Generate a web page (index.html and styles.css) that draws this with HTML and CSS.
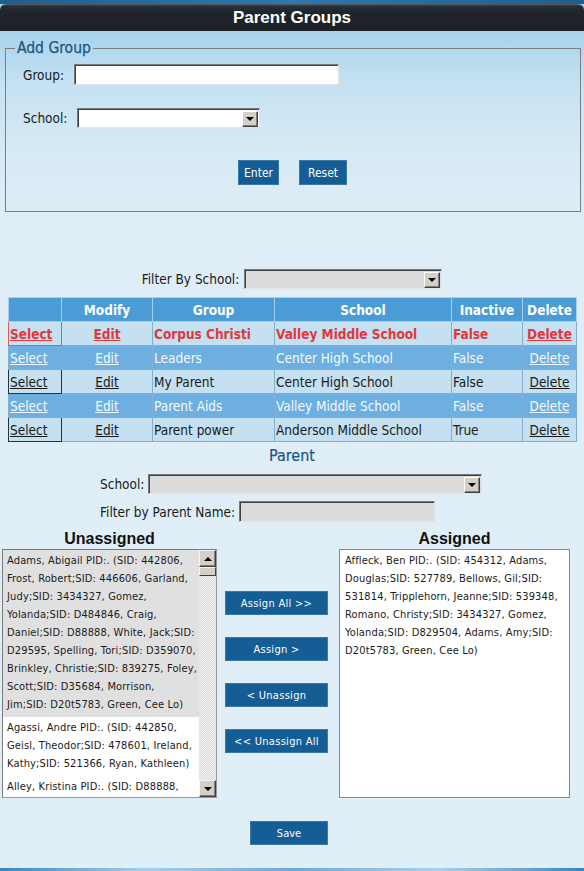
FILE: index.html
```html
<!DOCTYPE html>
<html lang="en">
<head>
<meta charset="utf-8">
<title>Parent Groups</title>
<link rel="stylesheet" href="styles.css">
</head>
<body>
<div class="topstrip"></div>
<header class="titlebar">Parent Groups</header>

<fieldset class="addgroup">
  <legend>Add Group</legend>
  <div class="frow">
    <label class="lbl">Group:</label>
    <input type="text" class="textbox w265">
  </div>
  <div class="frow r2">
    <label class="lbl">School:</label>
    <div class="select white w183"><span class="arrow"></span></div>
  </div>
  <div class="frow r3">
    <button class="btn small">Enter</button>
    <button class="btn small">Reset</button>
  </div>
</fieldset>

<div class="filter">
  <span class="lbl">Filter By School:</span>
  <div class="select gray w198"><span class="arrow"></span></div>
</div>

<table class="grid">
  <colgroup>
    <col class="c1"><col class="c2"><col class="c3"><col class="c4"><col class="c5"><col class="c6">
  </colgroup>
  <thead>
    <tr><th></th><th>Modify</th><th>Group</th><th>School</th><th>Inactive</th><th>Delete</th></tr>
  </thead>
  <tbody>
    <tr class="sel">
      <td class="first red"><a href="#">Select</a></td><td class="ctr"><a href="#">Edit</a></td><td>Corpus Christi</td><td>Valley Middle School</td><td>False</td><td class="ctr"><a href="#">Delete</a></td>
    </tr>
    <tr class="alt">
      <td class="first"><a href="#">Select</a></td><td class="ctr"><a href="#">Edit</a></td><td>Leaders</td><td>Center High School</td><td>False</td><td class="ctr"><a href="#">Delete</a></td>
    </tr>
    <tr class="norm">
      <td class="first dark"><a href="#">Select</a></td><td class="ctr"><a href="#">Edit</a></td><td>My Parent</td><td>Center High School</td><td>False</td><td class="ctr"><a href="#">Delete</a></td>
    </tr>
    <tr class="alt">
      <td class="first"><a href="#">Select</a></td><td class="ctr"><a href="#">Edit</a></td><td>Parent Aids</td><td>Valley Middle School</td><td>False</td><td class="ctr"><a href="#">Delete</a></td>
    </tr>
    <tr class="norm">
      <td class="first dark"><a href="#">Select</a></td><td class="ctr"><a href="#">Edit</a></td><td>Parent power</td><td>Anderson Middle School</td><td>True</td><td class="ctr"><a href="#">Delete</a></td>
    </tr>
  </tbody>
</table>

<h2 class="section">Parent</h2>
<div class="prow">
  <span class="lbl">School:</span>
  <div class="select gray w334"><span class="arrow"></span></div>
</div>
<div class="prow r2">
  <span class="lbl">Filter by Parent Name:</span>
  <input type="text" class="textbox gray w196">
</div>

<div class="lists">
  <div class="col left">
    <h3 class="listhead">Unassigned</h3>
    <div class="listbox">
      <div class="items">
        <div class="item selected">Adams, Abigail PID:. (SID: 442806,<br>Frost, Robert;SID: 446606, Garland,<br>Judy;SID: 3434327, Gomez,<br>Yolanda;SID: D484846, Craig,<br>Daniel;SID: D88888, White, Jack;SID:<br>D29595, Spelling, Tori;SID: D359070,<br>Brinkley, Christie;SID: 839275, Foley,<br>Scott;SID: D35684, Morrison,<br>Jim;SID: D20t5783, Green, Cee Lo)</div>
        <div class="item">Agassi, Andre PID:. (SID: 442850,<br>Geisl, Theodor;SID: 478601, Ireland,<br>Kathy;SID: 521366, Ryan, Kathleen)</div>
        <div class="item">Alley, Kristina PID:. (SID: D88888,</div>
      </div>
      <div class="scrollbar">
        <span class="sbtn"><span class="tri up"></span></span>
        <span class="thumb"></span>
        <span class="track"></span>
        <span class="sbtn"><span class="tri down"></span></span>
      </div>
    </div>
  </div>
  <div class="mid">
    <button class="btn wide">Assign All &gt;&gt;</button>
    <button class="btn wide">Assign &gt;</button>
    <button class="btn wide">&lt; Unassign</button>
    <button class="btn wide">&lt;&lt; Unassign All</button>
  </div>
  <div class="col right">
    <h3 class="listhead">Assigned</h3>
    <div class="listbox plain">
      <div class="items">
        <div class="item">Affleck, Ben PID:. (SID: 454312, Adams,<br>Douglas;SID: 527789, Bellows, Gil;SID:<br>531814, Tripplehorn, Jeanne;SID: 539348,<br>Romano, Christy;SID: 3434327, Gomez,<br>Yolanda;SID: D829504, Adams, Amy;SID:<br>D20t5783, Green, Cee Lo)</div>
      </div>
    </div>
  </div>
</div>

<div class="saverow"><button class="btn save">Save</button></div>
<div class="bottomstrip"></div>
</body>
</html>
```

FILE: styles.css
```css
* { box-sizing: border-box; }

body {
  margin: 0;
  width: 584px;
  min-height: 871px;
  font-family: "DejaVu Sans Condensed", "DejaVu Sans", sans-serif;
  font-stretch: semi-condensed;
  font-size: 13.5px;
  color: #1a1a1a;
  background: linear-gradient(to bottom, #a7d2ec 31px, #c4e1f2 80px, #d6eaf5 150px, #dfeef6 230px, #e0eef6 100%);
}

.topstrip {
  height: 4px;
  background: linear-gradient(to right, #1f5f8f, #2e77ab 50%, #1f5f8f);
}

.titlebar {
  height: 27px;
  line-height: 27px;
  text-align: center;
  color: #ffffff;
  font-family: "Liberation Sans", Arial, sans-serif;
  font-weight: bold;
  font-size: 17px;
  border-radius: 6px 6px 0 0;
  background: linear-gradient(to bottom, #5c636b 0, #2a3037 2px, #1f252b 8px, #1b2026 100%);
}

/* Add group fieldset */
.addgroup {
  margin: 9px 3px 0 5px;
  padding: 8px 17px 26px 17px;
  border: 1px solid #7d7d7d;
}

.addgroup legend {
  margin-left: -8px;
  padding: 0 2px;
  font-size: 15.5px;
  line-height: 16px;
  color: #1b5586;
  -webkit-text-stroke: 0.25px #1b5586;
}

.frow {
  display: flex;
  align-items: center;
  gap: 10px;
}

.frow.r2 { margin-top: 23px; }
.frow.r3 { margin-top: 32px; padding-left: 215px; gap: 20px; }

.lbl { color: #1a1a1a; }

.textbox {
  display: block;
  height: 21px;
  margin: 0;
  padding: 0;
  background: #ffffff;
  border: 1px solid;
  border-color: #7a7a7a #e4e4e4 #e4e4e4 #7a7a7a;
  box-shadow: inset 1px 1px 0 #404040;
  font: inherit;
}

.textbox.gray { background: #dcdcdc; }

.w265 { width: 265px; }
.w196 { width: 196px; }
.w183 { width: 183px; }
.w198 { width: 198px; }
.w334 { width: 334px; }

.select {
  height: 20px;
  display: flex;
  justify-content: flex-end;
  align-items: center;
  padding-right: 1px;
  border: 1px solid;
  border-color: #7a7a7a #e4e4e4 #e4e4e4 #7a7a7a;
  box-shadow: inset 1px 1px 0 #404040;
}

.select.white { background: #ffffff; }
.select.gray { background: #dcdcdc; }

.arrow {
  width: 16px;
  height: 16px;
  margin-top: 1px;
  background: #d4d0c8;
  border: 1px solid;
  border-color: #ffffff #404040 #404040 #ffffff;
  box-shadow: inset -1px -1px 0 #808080;
  display: flex;
  align-items: center;
  justify-content: center;
}

.arrow::after {
  content: "";
  border-left: 4px solid transparent;
  border-right: 4px solid transparent;
  border-top: 4px solid #000000;
  margin-top: 1px;
}

.btn {
  font-family: inherit;
  font-stretch: inherit;
  color: #ffffff;
  background: #145d95;
  border: 1px solid #3b78a7;
  padding: 0;
  margin: 0;
  cursor: pointer;
}

.btn.small {
  height: 25px;
  font-size: 12px;
}

.btn.small:first-child { width: 41px; }
.btn.small:last-child { width: 48px; }

/* Filter */
.filter {
  margin-top: 57px;
  display: flex;
  justify-content: center;
  align-items: center;
  gap: 5px;
}

/* Grid */
.grid {
  margin: 8px 0 0 8px;
  width: 568px;
  border-collapse: collapse;
  table-layout: fixed;
}

.c1 { width: 53px; }
.c2 { width: 91px; }
.c3 { width: 122px; }
.c4 { width: 177px; }
.c5 { width: 71px; }
.c6 { width: 54px; }

.grid th,
.grid td {
  height: 24px;
  padding: 0 1px;
  border: 1px solid #82aed4;
  white-space: nowrap;
  overflow: hidden;
}

.grid th {
  background: #4a9bd6;
  color: #ffffff;
  font-weight: bold;
  text-align: center;
  height: 24px;
  border-color: #a9cfea;
}

.grid td { text-align: left; }
.grid td.ctr { text-align: center; }

.grid a { color: inherit; text-decoration: underline; }

.grid tr.sel td {
  background: #c4e0f1;
  color: #e0383c;
  font-weight: bold;
}

.grid tr.alt td {
  background: #6cafe0;
  color: #f4faff;
}

.grid tr.norm td {
  background: #c4e0f1;
  color: #1a1a1a;
}

.grid td.first.red { border: 1px solid #e05a5a; }
.grid td.first.dark { border: 1px solid #25323f; }

/* Parent section */
.section {
  margin: 5px 0 0;
  font-size: 16px;
  line-height: 18px;
  font-weight: normal;
  text-align: center;
  color: #1b5586;
  -webkit-text-stroke: 0.2px #1b5586;
}

.prow {
  margin: 9px 0 0 100px;
  display: flex;
  align-items: center;
  gap: 4px;
}

.prow.r2 { margin-top: 7px; }

/* Lists */
.lists {
  margin: 8px 0 0 2px;
  display: flex;
  align-items: flex-start;
}

.col.left { width: 215px; }
.col.right { width: 231px; margin-left: 11px; }

.listhead {
  margin: 0 0 1px;
  font-family: "Liberation Sans", Arial, sans-serif;
  font-size: 16px;
  line-height: 18px;
  font-weight: bold;
  text-align: center;
  color: #111111;
}

.listbox {
  height: 249px;
  display: flex;
  background: #ffffff;
  border: 1px solid;
  border-color: #7a7a7a #9a9a9a #9a9a9a #7a7a7a;
  font-size: 11px;
  letter-spacing: 0.15px;
  line-height: 18px;
  overflow: hidden;
}

.listbox.plain { border-color: #8a8a8a; }

.items {
  flex: 1;
  overflow: hidden;
  white-space: nowrap;
}

.item {
  padding: 2px 4px 3px 4px;
  color: #1a1a1a;
}

.listbox.plain .item { padding: 2px 5px; }

.item.selected { background: #e0e0e0; }

.scrollbar {
  width: 17px;
  display: flex;
  flex-direction: column;
  background: repeating-conic-gradient(#f4f4f4 0 25%, #d8d8d8 0 50%) 0 0 / 2px 2px;
}

.sbtn {
  width: 17px;
  height: 17px;
  background: #d4d0c8;
  border: 1px solid;
  border-color: #f4f4f4 #404040 #404040 #f4f4f4;
  box-shadow: inset -1px -1px 0 #808080;
  display: flex;
  align-items: center;
  justify-content: center;
}

.thumb {
  height: 9px;
  background: #d4d0c8;
  border: 1px solid;
  border-color: #f4f4f4 #404040 #404040 #f4f4f4;
}

.track { flex: 1; }

.tri {
  width: 0;
  height: 0;
  border-left: 4px solid transparent;
  border-right: 4px solid transparent;
}

.tri.up { border-bottom: 4px solid #000000; }
.tri.down { border-top: 4px solid #000000; }

.mid {
  width: 103px;
  margin-left: 8px;
  padding-top: 61px;
  display: flex;
  flex-direction: column;
  gap: 22px;
}

.btn.wide {
  width: 103px;
  height: 24px;
  font-size: 11px;
  letter-spacing: 0.3px;
}

.saverow {
  margin-top: 23px;
  padding-left: 250px;
}

.btn.save {
  width: 78px;
  height: 24px;
  font-size: 11px;
}

.bottomstrip {
  margin-top: 23px;
  height: 4px;
  background: linear-gradient(to right, #3a86c0, #a3cfee 25%, #6aa9d9 50%, #a7d1ee 75%, #3a86c0);
}
```
